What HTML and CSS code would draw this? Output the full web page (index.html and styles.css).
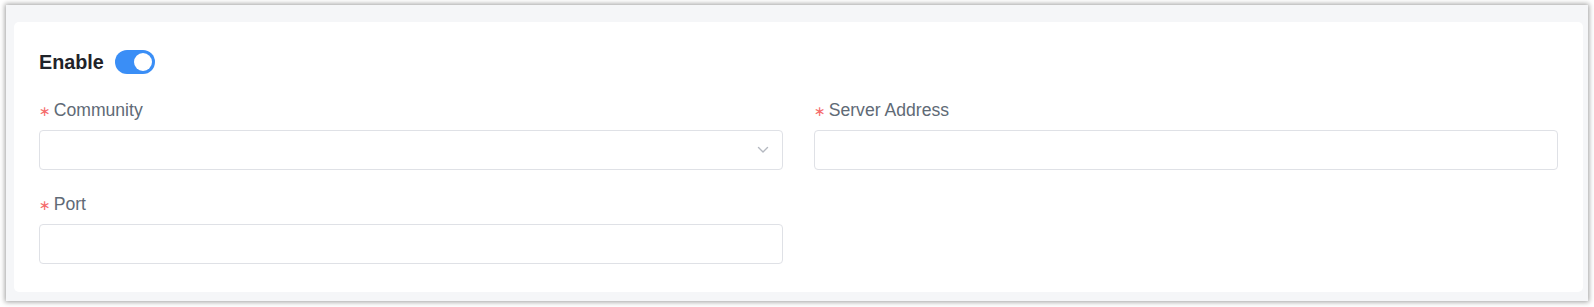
FILE: index.html
```html
<!DOCTYPE html>
<html lang="en">
<head>
<meta charset="utf-8">
<title>SNMP Settings</title>
<link rel="stylesheet" href="styles.css">
</head>
<body>
<div class="frame">
  <div class="card">
    <div class="enable-row">
      <span class="enable-label">Enable</span>
      <span class="switch is-on"><span class="knob"></span></span>
    </div>
    <div class="form-grid">
      <div class="field">
        <label class="field-label"><span class="req">∗</span>Community</label>
        <div class="input select">
          <svg class="chevron" width="12" height="8" viewBox="0 0 12 8"><path d="M1.5 1.5 L6 6 L10.5 1.5" fill="none" stroke="#b4b8c0" stroke-width="1.4" stroke-linecap="round" stroke-linejoin="round"/></svg>
        </div>
      </div>
      <div class="field">
        <label class="field-label"><span class="req">∗</span>Server Address</label>
        <div class="input"></div>
      </div>
      <div class="field">
        <label class="field-label"><span class="req">∗</span>Port</label>
        <div class="input"></div>
      </div>
    </div>
  </div>
</div>
</body>
</html>
```

FILE: styles.css
```css
html, body {
  margin: 0;
  padding: 0;
  background: #ffffff;
}
body {
  font-family: "Liberation Sans", Arial, sans-serif;
  padding: 5px 6px 6px 6px;
}
.frame {
  background: #f5f6f8;
  padding: 17px 5px 9px 8px;
  box-shadow: 0 0 5px 1px rgba(0, 0, 0, 0.38);
}
.card {
  background: #ffffff;
  border-radius: 5px;
  padding: 28px 25px 28px 25px;
}
.enable-row {
  display: flex;
  align-items: center;
  gap: 11px;
  height: 24px;
}
.enable-label {
  font-size: 19.8px;
  font-weight: bold;
  color: #1f2329;
}
.switch {
  display: inline-flex;
  align-items: center;
  justify-content: flex-end;
  width: 40px;
  height: 24px;
  border-radius: 12px;
  background: #3a8ef6;
  padding: 0 3px;
  box-sizing: border-box;
}
.knob {
  width: 18px;
  height: 18px;
  border-radius: 50%;
  background: #ffffff;
}
.form-grid {
  display: grid;
  grid-template-columns: 1fr 1fr;
  column-gap: 31px;
  row-gap: 21px;
  margin-top: 23px;
}
.field {
  display: flex;
  flex-direction: column;
}
.field-label {
  display: block;
  font-size: 17.6px;
  line-height: 22px;
  padding-top: 2px;
  color: #606a76;
  margin-bottom: 9px;
}
.req {
  font-family: "DejaVu Sans", sans-serif;
  font-size: 14px;
  line-height: 1;
  color: #f56c6c;
  margin-right: 3px;
}
.input {
  height: 40px;
  box-sizing: border-box;
  border: 1px solid #dfe1e6;
  border-radius: 4px;
  background: #ffffff;
}
.select {
  display: flex;
  align-items: center;
  justify-content: flex-end;
  padding-right: 13px;
}
```
